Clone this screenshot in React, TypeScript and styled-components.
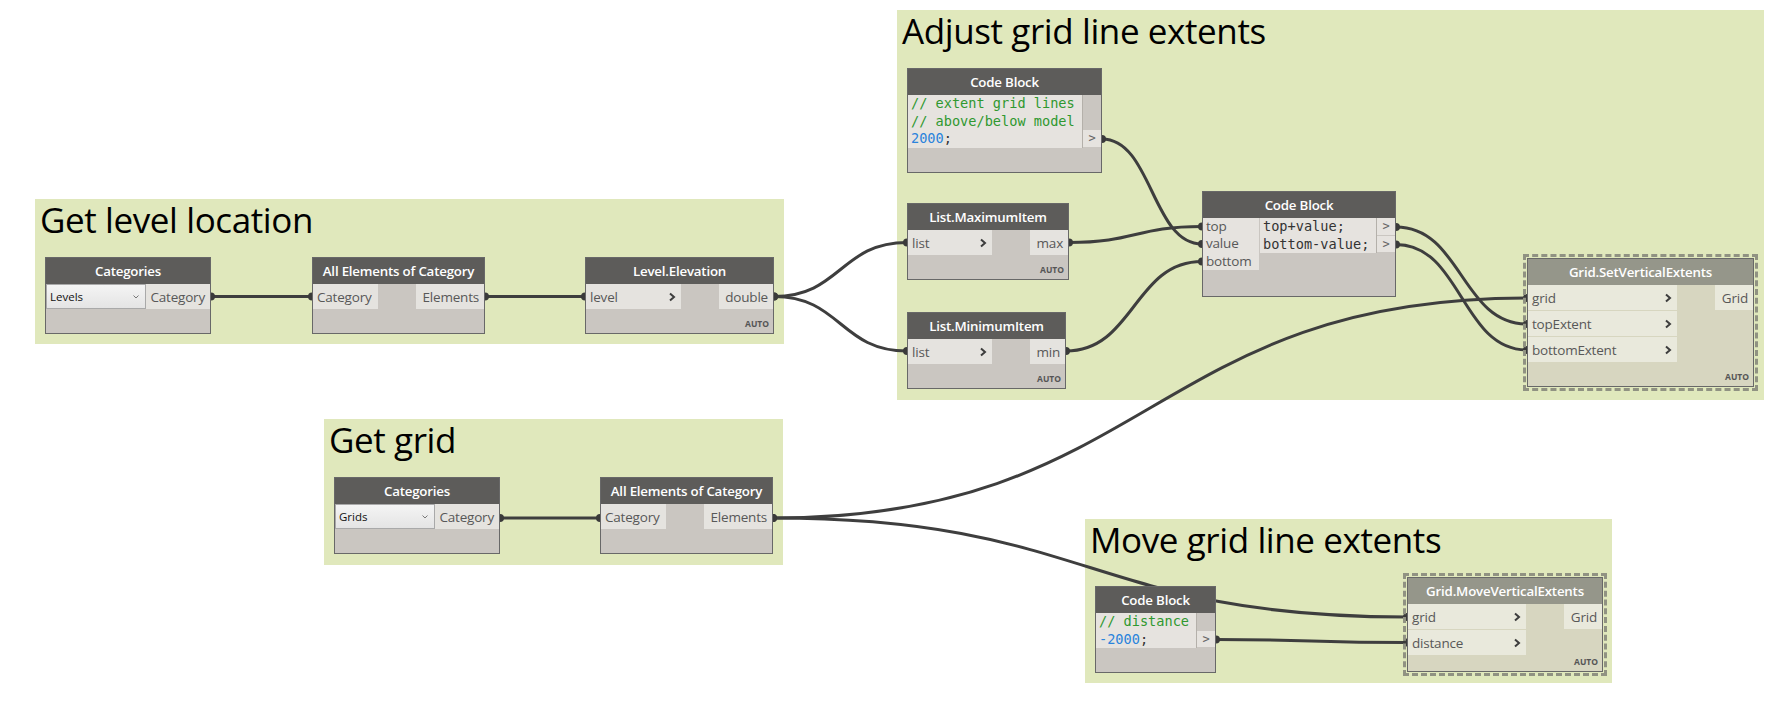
import React from "react";
import styled, { createGlobalStyle } from "styled-components";

const UI = `"Open Sans", "Noto Sans", sans-serif`;
const MONO = `"DejaVu Sans Mono", "Liberation Mono", monospace`;

const GlobalStyle = createGlobalStyle`
  html, body {
    margin: 0;
    padding: 0;
    background: #ffffff;
  }
  * {
    box-sizing: border-box;
  }
`;

const Canvas = styled.div`
  position: relative;
  width: 1790px;
  height: 724px;
  overflow: hidden;
  background: #ffffff;
  font-family: ${UI};
`;

// groups and nodes sit at their own coordinates on the graph canvas
const Group = styled.div<{ $x: number; $y: number; $w: number; $h: number }>`
  position: absolute;
  left: ${(p) => p.$x}px;
  top: ${(p) => p.$y}px;
  width: ${(p) => p.$w}px;
  height: ${(p) => p.$h}px;
  background: #e0e8bc;
  z-index: 0;
`;

const GroupTitle = styled.div`
  padding: 0 5px;
  font-size: 35px;
  line-height: 38px;
  margin-top: 2px;
  color: #000;
  letter-spacing: -0.4px;
  white-space: nowrap;
`;

const WireLayer = styled.svg`
  position: absolute;
  left: 0;
  top: 0;
  z-index: 1;
  pointer-events: none;
`;

const NodeBox = styled.div<{
  $x: number;
  $y: number;
  $w: number;
  $h: number;
  $selected?: boolean;
}>`
  position: absolute;
  left: ${(p) => p.$x}px;
  top: ${(p) => p.$y}px;
  width: ${(p) => p.$w}px;
  height: ${(p) => p.$h}px;
  z-index: 2;
  display: flex;
  flex-direction: column;
  border: 1px solid #686868;
  background: ${(p) => (p.$selected ? "#d7d6c0" : "#cac6c1")};
  &::before {
    content: "";
    display: ${(p) => (p.$selected ? "block" : "none")};
    position: absolute;
    left: -5px;
    top: -5px;
    right: -5px;
    bottom: -5px;
    border: 3px dashed #909282;
    pointer-events: none;
  }
`;

const Header = styled.div<{ $selected?: boolean }>`
  height: 26px;
  flex: none;
  background: ${(p) => (p.$selected ? "#95968a" : "#5d5c5a")};
  color: #ffffff;
  font-size: 13.3px;
  font-weight: 600;
  line-height: 26px;
  text-align: center;
  white-space: nowrap;
  letter-spacing: -0.2px;
`;

const Body = styled.div`
  flex: 1;
  display: flex;
  flex-direction: column;
`;

const PortsRow = styled.div`
  display: flex;
  justify-content: space-between;
  align-items: flex-start;
`;

const PortCol = styled.div<{ $w?: number; $grow?: boolean }>`
  display: flex;
  flex-direction: column;
  gap: 1px;
  width: ${(p) => (p.$w ? `${p.$w}px` : "auto")};
  flex: ${(p) => (p.$grow ? 1 : "none")};
`;

const PortCell = styled.div<{ $selected?: boolean; $out?: boolean }>`
  height: 25px;
  display: flex;
  align-items: center;
  justify-content: ${(p) => (p.$out ? "flex-end" : "space-between")};
  padding: 0 5px 0 4px;
  background: ${(p) => (p.$selected ? "#e9e9dc" : "#e5e3df")};
  color: #585858;
  font-size: 13.5px;
  white-space: nowrap;
  letter-spacing: -0.2px;
`;

const Chevron = styled.svg`
  width: 8px;
  height: 10px;
  flex: none;
`;

const Lacing = styled.div`
  margin-top: auto;
  align-self: flex-end;
  padding: 0 4px 4px 0;
  font-size: 8.5px;
  font-weight: 700;
  color: #555;
  line-height: 10px;
`;

const Dropdown = styled.div`
  width: 100px;
  height: 25px;
  display: flex;
  align-items: center;
  justify-content: space-between;
  padding: 0 6px 0 3px;
  background: linear-gradient(#f4f4f4, #e4e4e4);
  border: 1px solid #a9a9a9;
  font-size: 11.5px;
  color: #111;
`;

const CodeRow = styled.div`
  display: flex;
  align-items: flex-start;
`;

const CodeArea = styled.div<{ $lines: number }>`
  flex: 1;
  height: ${(p) => p.$lines * 17.6}px;
  background: #e6e3df;
  padding-left: 3px;
  font-family: ${MONO};
  font-size: 13.6px;
  line-height: 17.6px;
  color: #333;
  white-space: pre;
  overflow: hidden;
`;

const CodeInputs = styled.div`
  width: 57px;
  display: flex;
  flex-direction: column;
  border-right: 1px solid #cac6c1;
`;

const CodeInputCell = styled.div`
  height: 17.4px;
  line-height: 17.4px;
  padding-left: 3px;
  background: #e6e3df;
  color: #585858;
  font-size: 13.5px;
  letter-spacing: -0.2px;
`;

const CodeOutCol = styled.div`
  width: 19px;
  display: flex;
  flex-direction: column;
  border-left: 1px solid #b4b0aa;
`;

const CodeOutCell = styled.div<{ $on: boolean }>`
  height: 17.6px;
  line-height: 17.6px;
  text-align: center;
  font-family: ${MONO};
  font-size: 12px;
  color: #666;
  background: ${(p) => (p.$on ? "#e6e3df" : "transparent")};
  border-bottom: ${(p) => (p.$on ? "1px solid #cac6c1" : "none")};
`;

const Tok = styled.span<{ $kind: "c" | "n" | "t" }>`
  color: ${(p) => (p.$kind === "c" ? "#2f982f" : p.$kind === "n" ? "#2b84dc" : "#333")};
`;

type Token = [string, "c" | "n" | "t"];

interface NodeData {
  id: string;
  title: string;
  x: number;
  y: number;
  w: number;
  h: number;
  selected?: boolean;
  auto?: boolean;
  chevron?: boolean;
  kind: "fn" | "select" | "code";
  inputs?: string[];
  outputs?: string[];
  inW?: number;
  outW?: number;
  value?: string;
  code?: Token[][];
  outRows?: boolean[];
}

const nodes: NodeData[] = [
  { id: "cat1", title: "Categories", x: 45, y: 257, w: 166, h: 77, kind: "select", value: "Levels" },
  { id: "all1", title: "All Elements of Category", x: 312, y: 257, w: 173, h: 77, kind: "fn", inputs: ["Category"], outputs: ["Elements"], inW: 65, outW: 68 },
  { id: "lev", title: "Level.Elevation", x: 585, y: 257, w: 189, h: 77, kind: "fn", inputs: ["level"], outputs: ["double"], inW: 95, outW: 54, auto: true, chevron: true },
  {
    id: "cb1", title: "Code Block", x: 907, y: 68, w: 195, h: 105, kind: "code",
    code: [
      [["// extent grid lines", "c"]],
      [["// above/below model", "c"]],
      [["2000", "n"], [";", "t"]],
    ],
    outRows: [false, false, true],
  },
  { id: "max", title: "List.MaximumItem", x: 907, y: 203, w: 162, h: 77, kind: "fn", inputs: ["list"], outputs: ["max"], inW: 84, outW: 38, auto: true, chevron: true },
  { id: "min", title: "List.MinimumItem", x: 907, y: 312, w: 159, h: 77, kind: "fn", inputs: ["list"], outputs: ["min"], inW: 84, outW: 35, auto: true, chevron: true },
  {
    id: "cb2", title: "Code Block", x: 1202, y: 191, w: 194, h: 106, kind: "code",
    inputs: ["top", "value", "bottom"],
    code: [[["top+value;", "t"]], [["bottom-value;", "t"]]],
    outRows: [true, true],
  },
  { id: "set", title: "Grid.SetVerticalExtents", x: 1527, y: 258, w: 227, h: 129, kind: "fn", selected: true, inputs: ["grid", "topExtent", "bottomExtent"], outputs: ["Grid"], inW: 149, outW: 38, auto: true, chevron: true },
  { id: "cat2", title: "Categories", x: 334, y: 477, w: 166, h: 77, kind: "select", value: "Grids" },
  { id: "all2", title: "All Elements of Category", x: 600, y: 477, w: 173, h: 77, kind: "fn", inputs: ["Category"], outputs: ["Elements"], inW: 65, outW: 68 },
  {
    id: "cb3", title: "Code Block", x: 1095, y: 586, w: 121, h: 87, kind: "code",
    code: [[["// distance", "c"]], [["-2000", "n"], [";", "t"]]],
    outRows: [false, true],
  },
  { id: "move", title: "Grid.MoveVerticalExtents", x: 1407, y: 577, w: 196, h: 95, kind: "fn", selected: true, inputs: ["grid", "distance"], outputs: ["Grid"], inW: 118, outW: 38, auto: true, chevron: true },
];

const groups = [
  { title: "Get level location", x: 35, y: 199, w: 749, h: 145 },
  { title: "Adjust grid line extents", x: 897, y: 10, w: 867, h: 390 },
  { title: "Get grid", x: 324, y: 419, w: 459, h: 146 },
  { title: "Move grid line extents", x: 1085, y: 519, w: 527, h: 164 },
];

const wires: [number, number, number, number][] = [
  [211, 296.5, 312, 296.5],
  [485, 296.5, 585, 296.5],
  [774, 296.5, 907, 242.5],
  [774, 296.5, 907, 351],
  [1102, 139, 1202, 244],
  [1069, 242.5, 1202, 226.5],
  [1066, 351, 1202, 261.5],
  [1396, 227, 1527, 324],
  [1396, 244.5, 1527, 350],
  [773, 518, 1527, 298],
  [500, 518, 600, 518],
  [773, 518, 1407, 617],
  [1216, 639.5, 1407, 642.5],
];

function wirePath([x1, y1, x2, y2]: [number, number, number, number]) {
  const mx = (x1 + x2) / 2;
  return `M ${x1} ${y1} C ${mx} ${y1}, ${mx} ${y2}, ${x2} ${y2}`;
}

function InputChevron() {
  return (
    <Chevron viewBox="0 0 8 10">
      <polyline points="2,1.5 6,5 2,8.5" fill="none" stroke="#3d3d3d" strokeWidth="2" />
    </Chevron>
  );
}

function GraphNode({ node }: { node: NodeData }) {
  let content: React.ReactNode = null;
  if (node.kind === "fn") {
    content = (
      <PortsRow>
        <PortCol $w={node.inW}>
          {node.inputs?.map((name) => (
            <PortCell key={name} $selected={node.selected}>
              {name}
              {node.chevron && <InputChevron />}
            </PortCell>
          ))}
        </PortCol>
        <PortCol $w={node.outW}>
          {node.outputs?.map((name) => (
            <PortCell key={name} $out $selected={node.selected}>
              {name}
            </PortCell>
          ))}
        </PortCol>
      </PortsRow>
    );
  } else if (node.kind === "select") {
    content = (
      <PortsRow>
        <Dropdown>
          {node.value}
          <svg width="6" height="4" viewBox="0 0 6 4">
            <polyline points="0.5,0.5 3,3 5.5,0.5" fill="none" stroke="#777" strokeWidth="1" />
          </svg>
        </Dropdown>
        <PortCol $grow>
          <PortCell $out>Category</PortCell>
        </PortCol>
      </PortsRow>
    );
  } else {
    content = (
      <CodeRow>
        {node.inputs && (
          <CodeInputs>
            {node.inputs.map((name) => (
              <CodeInputCell key={name}>{name}</CodeInputCell>
            ))}
          </CodeInputs>
        )}
        <CodeArea $lines={node.code!.length}>
          {node.code!.map((line, i) => (
            <div key={i}>
              {line.map(([text, kind], j) => (
                <Tok key={j} $kind={kind}>
                  {text}
                </Tok>
              ))}
            </div>
          ))}
        </CodeArea>
        <CodeOutCol>
          {node.outRows!.map((on, i) => (
            <CodeOutCell key={i} $on={on}>
              {on ? ">" : ""}
            </CodeOutCell>
          ))}
        </CodeOutCol>
      </CodeRow>
    );
  }

  return (
    <NodeBox $x={node.x} $y={node.y} $w={node.w} $h={node.h} $selected={node.selected}>
      <Header $selected={node.selected}>{node.title}</Header>
      <Body>
        {content}
        {node.auto && <Lacing>AUTO</Lacing>}
      </Body>
    </NodeBox>
  );
}

export default function App() {
  return (
    <>
      <GlobalStyle />
      <Canvas>
        {groups.map((g) => (
          <Group key={g.title} $x={g.x} $y={g.y} $w={g.w} $h={g.h}>
            <GroupTitle>{g.title}</GroupTitle>
          </Group>
        ))}
        <WireLayer width="1790" height="724" viewBox="0 0 1790 724">
          {wires.map((w, i) => (
            <path key={i} d={wirePath(w)} fill="none" stroke="#3e3e3e" strokeWidth="3" />
          ))}
          {wires.map((w, i) => (
            <g key={`m${i}`} fill="#3a3a3a">
              <circle cx={w[0]} cy={w[1]} r="4" />
              <circle cx={w[2]} cy={w[3]} r="4" />
            </g>
          ))}
        </WireLayer>
        {nodes.map((n) => (
          <GraphNode key={n.id} node={n} />
        ))}
      </Canvas>
    </>
  );
}
